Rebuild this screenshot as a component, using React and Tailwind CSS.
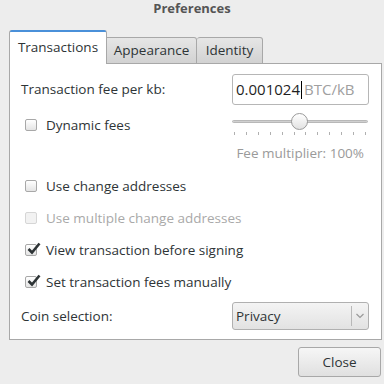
import React from 'react';

function Check({ checked, disabled }) {
  return (
    <span
      className={
        'relative inline-block w-[12px] h-[12px] rounded-[2px] border ' +
        (disabled ? 'border-[#d6d6d6] bg-[#f2f2f2]' : 'border-[#a8a8a8] bg-gradient-to-b from-white to-[#e4e4e4]')
      }
    >
      {checked && (
        <svg className="absolute left-[1px] top-[-3px]" width="14" height="13" viewBox="0 0 14 13">
          <path d="M1.5 7 L5 10.5 L12.5 1.5" stroke="#2e3436" strokeWidth="2.6" fill="none" />
        </svg>
      )}
    </span>
  );
}

function CheckRow({ label, checked, disabled }) {
  return (
    <div className="flex items-center h-[20px] pl-[15px]">
      <Check checked={checked} disabled={disabled} />
      <span className={'ml-[9px] whitespace-nowrap ' + (disabled ? 'text-[#a9a9a9]' : 'text-[#2e3436]')}>{label}</span>
    </div>
  );
}

export default function App() {
  const ticks = Array.from({ length: 12 });
  return (
    <div
      className="w-[384px] h-[384px] bg-[#ededed] text-[13.5px] text-[#2e3436] overflow-hidden"
      style={{ fontFamily: '"Open Sans", "Noto Sans", sans-serif' }}
    >
      {/* Titel */}
      <div className="h-[30px] text-center font-bold text-[13px] text-[#555] leading-[16px]">Preferences</div>

      {/* Tabs */}
      <div className="flex items-end pl-[9px] h-[34px]">
        <div className="relative z-10 h-[34px] w-[98px] bg-white border border-[#a8a8a8] border-b-0 rounded-t-[3px] flex items-center justify-center">
          <div className="absolute left-0 right-0 top-[-1px] h-[2px] bg-[#4a90d9] rounded-t-[3px]" />
          Transactions
        </div>
        <div className="h-[27px] w-[90px] bg-gradient-to-b from-[#e6e6e6] to-[#d2d2d2] border border-[#a8a8a8] border-l-0 rounded-tr-[3px] flex items-center justify-center">
          Appearance
        </div>
        <div className="h-[27px] w-[66px] bg-gradient-to-b from-[#e6e6e6] to-[#d2d2d2] border border-[#a8a8a8] border-l-0 rounded-t-[3px] flex items-center justify-center">
          Identity
        </div>
      </div>

      {/* Panel */}
      <div className="ml-[9px] w-[373px] h-[277px] -mt-px bg-white border border-[#a8a8a8] pt-[10px] pr-[12px]">
        <div className="flex items-center justify-between pl-[11px]">
          <span>Transaction fee per kb:</span>
          <div className="w-[137px] h-[31px] border border-[#b6b6b6] rounded-[3px] flex items-center pl-[3px] text-[15px]">
            <span className="text-[#1f1f1f]">0.001024</span>
            <span className="w-px h-[18px] bg-black mx-[1px]" />
            <span className="text-[#a0a0a0] ml-[1px]">BTC/kB</span>
          </div>
        </div>

        <div className="flex justify-between mt-[7px]">
          <div className="pt-[3px]">
            <CheckRow label="Dynamic fees" />
          </div>
          <div className="w-[136px] mr-[1px]">
            <div className="relative h-[18px]">
              <div className="absolute left-0 right-0 top-[8px] h-[3px] rounded-full bg-[#d0d0d0] border border-[#b8b8b8]" />
              <div className="absolute left-[59px] top-[1px] w-[17px] h-[17px] rounded-full border border-[#9a9a9a] bg-gradient-to-b from-white to-[#e2e2e2]" />
            </div>
            <div className="flex justify-between px-[2px] mt-[2px]">
              {ticks.map((_, i) => (
                <span key={i} className="w-px h-[3px] bg-[#b0b0b0]" />
              ))}
            </div>
            <div className="text-right whitespace-nowrap text-[#9a9a9a] mt-[8px] pr-[4px]">Fee multiplier: 100%</div>
          </div>
        </div>

        <div className="flex flex-col gap-[12px] mt-[13px]">
          <CheckRow label="Use change addresses" />
          <CheckRow label="Use multiple change addresses" disabled />
          <CheckRow label="View transaction before signing" checked />
          <CheckRow label="Set transaction fees manually" checked />
        </div>

        <div className="flex items-center justify-between pl-[11px] mt-[10px]">
          <span>Coin selection:</span>
          <div className="w-[137px] h-[28px] border border-[#b0b0b0] rounded-[3px] bg-gradient-to-b from-[#f4f4f4] to-[#e2e2e2] flex items-center">
            <span className="flex-1 pl-[3px]">Privacy</span>
            <span className="w-px h-[20px] bg-[#b8b8b8]" />
            <svg className="mx-[4px]" width="8" height="6" viewBox="0 0 8 6">
              <path d="M0.5 1 L4 4.5 L7.5 1" stroke="#999" strokeWidth="1.2" fill="none" />
            </svg>
          </div>
        </div>
      </div>

      {/* Close */}
      <div className="flex justify-end pr-[3px] mt-[7px]">
        <button className="w-[83px] h-[30px] border border-[#a8a8a8] rounded-[3px] bg-gradient-to-b from-[#f6f6f6] to-[#e0e0e0] text-[#2e3436]">
          Close
        </button>
      </div>
    </div>
  );
}
